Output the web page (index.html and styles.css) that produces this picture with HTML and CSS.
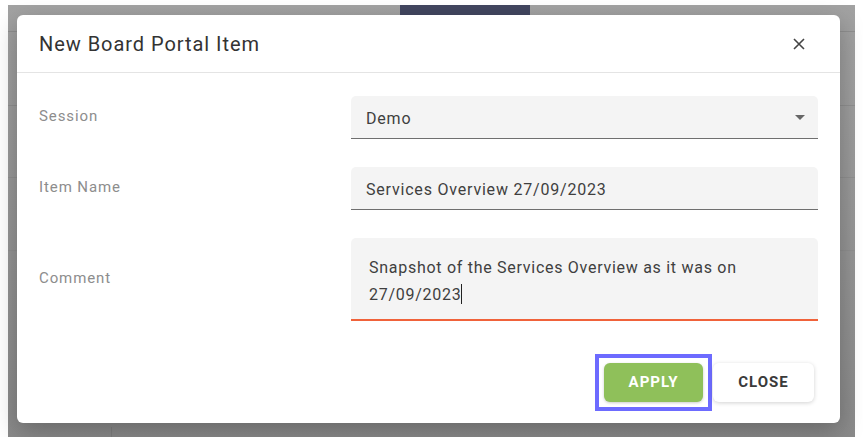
FILE: index.html
```html
<!DOCTYPE html>
<html lang="en">
<head>
  <meta charset="UTF-8" />
  <meta name="viewport" content="width=device-width, initial-scale=1.0" />
  <title>New Board Portal Item</title>
  <link rel="stylesheet" href="styles.css">
</head>
<body>
  <div class="backdrop">
    <div class="tab-strip"></div>
    <div class="dialog">
      <div class="dialog-header">
        <h2 class="dialog-title">New Board Portal Item</h2>
        <button class="close-x" aria-label="Close">
          <svg width="12" height="12" viewBox="0 0 12 12">
            <path d="M1 1 L11 11 M11 1 L1 11" stroke="#444" stroke-width="1.6" fill="none" />
          </svg>
        </button>
      </div>

      <div class="dialog-body">
        <label class="field-label">Session</label>
        <div class="field field-select">
          <span>Demo</span>
          <span class="caret"></span>
        </div>

        <label class="field-label">Item Name</label>
        <div class="field">Services Overview 27/09/2023</div>

        <label class="field-label">Comment</label>
        <div class="field field-area">Snapshot of the Services Overview as it was on 27/09/2023<span class="cursor"></span></div>
      </div>

      <div class="dialog-footer">
        <span class="focus-ring">
          <button class="btn btn-apply">APPLY</button>
        </span>
        <button class="btn btn-close">CLOSE</button>
      </div>
    </div>
  </div>
</body>
</html>
```

FILE: styles.css
```css
body {
  margin: 0;
  background-color: #fff;
  font-family: Roboto, "Liberation Sans", Arial, sans-serif;
}
.backdrop {
  position: relative;
  margin: 5px 0 0 8px;
  width: 847px;
  height: 432px;
  padding: 10px 15px 0 9px;
  box-sizing: border-box;
  background-color: #9a9a9a;
  background-image:
    linear-gradient(#8f8f8f, #8f8f8f),
    linear-gradient(#8f8f8f, #8f8f8f),
    linear-gradient(#8f8f8f, #8f8f8f),
    linear-gradient(#8f8f8f, #8f8f8f),
    linear-gradient(#7f7f7f, #7f7f7f),
    linear-gradient(#a2a2a2, #8a8a8a);
  background-size: 100% 1px, 100% 1px, 100% 1px, 100% 1px, 1px 10px, 100% 100%;
  background-position: 0 26px, 0 100px, 0 172px, 0 245px, 103px 422px, 0 0;
  background-repeat: no-repeat;
}
.tab-strip {
  position: absolute;
  top: 0;
  left: 392px;
  width: 130px;
  height: 10px;
  background-color: #42465f;
}
.dialog {
  position: relative;
  background-color: #fff;
  border-radius: 6px;
  height: 408px;
  box-shadow: 0 8px 24px rgba(0, 0, 0, 0.25);
  display: flex;
  flex-direction: column;
}
.dialog-header {
  height: 57px;
  border-bottom: 1px solid #e4e4e4;
  display: flex;
  align-items: center;
  justify-content: space-between;
  padding: 0 34px 0 22px;
}
.dialog-title {
  margin: 0;
  font-size: 20px;
  font-weight: 400;
  color: #333;
  letter-spacing: 0.95px;
}
.close-x {
  border: none;
  background: none;
  padding: 0;
  width: 14px;
  height: 14px;
  display: flex;
  align-items: center;
  justify-content: center;
}
.dialog-body {
  display: grid;
  grid-template-columns: 312px 1fr;
  row-gap: 28px;
  align-items: center;
  padding: 23px 22px 0 22px;
}
.field-label {
  font-size: 15px;
  color: #8d8d8d;
  letter-spacing: 0.9px;
  margin-top: -3px;
}
.field {
  background-color: #f4f4f4;
  border-radius: 5px 5px 0 0;
  border-bottom: 1px solid #6f6f6f;
  box-sizing: border-box;
  height: 43px;
  padding: 2px 15px 0 15px;
  display: flex;
  align-items: center;
  font-size: 16px;
  letter-spacing: 0.8px;
  color: #3f3f3f;
}
.field-select {
  justify-content: space-between;
  padding-right: 13px;
}
.caret {
  width: 0;
  height: 0;
  border-left: 5px solid transparent;
  border-right: 5px solid transparent;
  border-top: 5px solid #666;
  margin-top: -2px;
}
.field-area {
  display: block;
  height: 83px;
  padding: 16px 40px 0 18px;
  line-height: 27px;
  letter-spacing: 0.72px;
  border-bottom: 2px solid #f0623a;
}
.cursor {
  display: inline-block;
  width: 1px;
  height: 20px;
  background-color: #222;
  vertical-align: -4px;
}
.dialog-footer {
  margin-top: auto;
  display: flex;
  align-items: center;
  justify-content: flex-end;
  gap: 1px;
  padding: 0 26px 12px 0;
}
.focus-ring {
  display: flex;
  padding: 5px;
  border: 4px solid #6d6bff;
}
.btn {
  height: 39px;
  padding-bottom: 2px;
  border: none;
  border-radius: 6px;
  font-family: Roboto, "Liberation Sans", Arial, sans-serif;
  font-size: 15px;
  font-weight: 700;
  letter-spacing: 1px;
  cursor: pointer;
}
.btn-apply {
  width: 99px;
  background-color: #8fc05a;
  color: #fff;
  box-shadow: 0 1px 3px rgba(0, 0, 0, 0.2);
}
.btn-close {
  width: 101px;
  background-color: #fff;
  color: #3a3a3a;
  box-shadow: 0 1px 4px rgba(0, 0, 0, 0.18);
}
```
